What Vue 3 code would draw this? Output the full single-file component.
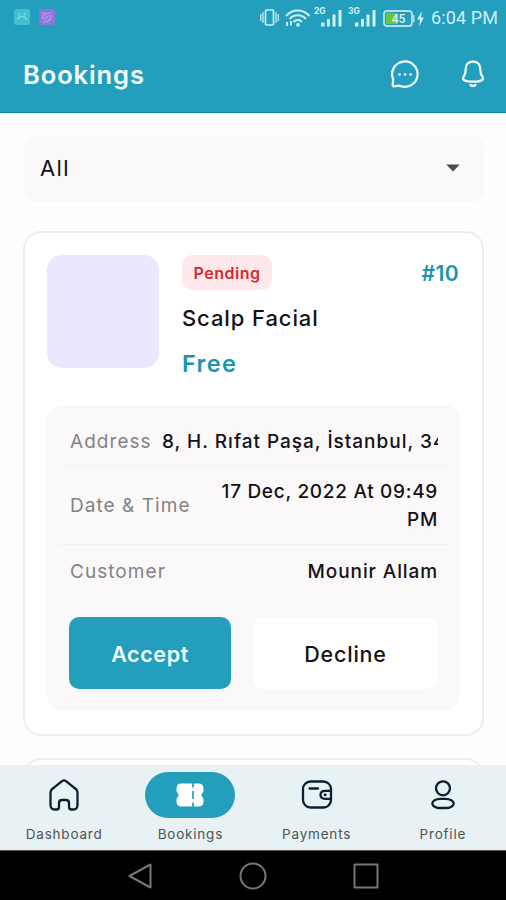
<script setup>
const rows = [
  { key: 'address', label: 'Address', value: '8, H. Rıfat Paşa, İstanbul, 34' },
  { key: 'date', label: 'Date & Time', value: '17 Dec, 2022 At 09:49 PM' },
  { key: 'customer', label: 'Customer', value: 'Mounir Allam' },
]
const tabs = [
  { key: 'dashboard', label: 'Dashboard' },
  { key: 'bookings', label: 'Bookings', active: true },
  { key: 'payments', label: 'Payments' },
  { key: 'profile', label: 'Profile' },
]
</script>

<template>
  <div class="screen">
    <header class="header">
      <div class="status">
        <div class="notes">
          <svg width="16" height="16" viewBox="0 0 16 16">
            <rect width="16" height="16" rx="2.5" fill="#40c1cd" />
            <path d="M3.500 11c.5-4.500 8.500-4.500 9 0M4.500 4l1.500 2.500M11.500 4L10 6.500" fill="none" stroke="#86dde3" stroke-width="1.200" />
          </svg>
          <svg width="16" height="16" viewBox="0 0 16 16">
            <rect width="16" height="16" rx="2.500" fill="#8c78d8" />
            <path d="M3 10c1-4 5-6 9-6M4 13c4 0 8-2 8.500-7M5 10.500l5-4M3 4h3" fill="none" stroke="#bba2ee" stroke-width="1.200" />
          </svg>
        </div>
        <div class="system">
          <svg class="system-icons" width="168" height="28" viewBox="0 0 168 28" fill="none">
            <g stroke="#cdf1f6" stroke-width="1.600">
              <rect x="5.500" y="10" width="8" height="15" rx="1" />
              <path d="M3 12v11M.8 14v7M16 12v11M18.200 14v7" stroke-width="1.200" />
            </g>
            <g stroke="#cdf1f6" stroke-width="2">
              <path d="M26 16c6.500-7.500 17-7.500 23.500 0M29.500 19c4.500-5 12-5 16.500 0M33.500 22c2.400-2.800 6.100-2.800 8.500 0" />
            </g>
            <circle cx="38" cy="24.800" r="1.900" fill="#cdf1f6" />
            <path d="M27 22v4M31 21v4.500" stroke="#cdf1f6" stroke-width="2" />
            <g fill="#cdf1f6">
              <path d="M61 22.500h3.500v4h-3.500zM67 19h3v7.500h-3zM72.500 14.500h3v12h-3zM78.500 10h3v16.500h-3z" />
              <path d="M95 22.500h3.500v4h-3.500zM101 19h3v7.500h-3zM106.500 14.500h3v12h-3zM112.500 10h3v16.500h-3z" />
              <text x="54" y="13.500" class="net">2G</text>
              <text x="88" y="13.500" class="net">3G</text>
            </g>
            <rect x="124" y="11" width="28" height="15" rx="3" stroke="#b9dce8" stroke-width="1.800" />
            <rect x="126" y="13" width="11.500" height="11" fill="#62c93d" />
            <path d="M153.500 15v7" stroke="#b9dce8" stroke-width="2" />
            <text x="138.500" y="23.300" text-anchor="middle" class="level">45</text>
            <path d="M162 11l-5 8.500h3l-1 7 5-9h-3z" fill="#cdf1f6" />
          </svg>
          <span class="clock">6:04 PM</span>
        </div>
      </div>
      <div class="bar">
        <h1 class="title">Bookings</h1>
        <div class="actions">
          <svg width="30" height="30" viewBox="0 0 30 30" fill="none" stroke="#f2fdff" stroke-width="2.200" stroke-linejoin="round">
            <path d="M3.200 20.200A12.700 12.700 0 1 1 9.600 26.700L3.600 27.300Q2.500 27.300 2.700 26z" />
            <path d="M9.500 15.500h.1M15 15.500h.1M20.500 15.500h.1" stroke-width="2.600" stroke-linecap="round" />
          </svg>
          <svg width="26" height="30" viewBox="0 0 26 30" fill="none" stroke="#f2fdff" stroke-width="2.300" stroke-linecap="round">
            <path d="M13 2.500c-4.500 0-7.300 3.200-7.300 7.500 0 4-.4 5.300-1.900 7.400-2.100 3.300.4 5.300 9.200 5.300s11.300-2 9.200-5.300c-1.500-2.100-1.900-3.400-1.900-7.400 0-4.300-2.800-7.500-7.300-7.500z" />
            <path d="M10.500 26c1.600 1.200 3.400 1.200 5 0" />
          </svg>
        </div>
      </div>
    </header>

    <main class="content">
      <div class="filter">
        <span>All</span>
        <svg width="14" height="8" viewBox="0 0 14 8"><path d="M.3.500h13.400L7 7.500z" fill="#4c4a4c" /></svg>
      </div>

      <article class="card">
        <div class="summary">
          <div class="thumb"></div>
          <div class="info">
            <div class="info-top">
              <span class="tag">Pending</span>
              <span class="number">#10</span>
            </div>
            <div class="service">Scalp Facial</div>
            <div class="price">Free</div>
          </div>
        </div>
        <div class="details">
          <div v-for="row in rows" :key="row.key" class="row" :class="row.key">
            <span class="label">{{ row.label }}</span>
            <span class="value">{{ row.value }}</span>
          </div>
          <div class="buttons">
            <button class="btn accept">Accept</button>
            <button class="btn decline">Decline</button>
          </div>
        </div>
      </article>
      <article class="card next"></article>
    </main>

    <nav class="tabs">
      <div v-for="tab in tabs" :key="tab.key" class="tab">
        <div class="pill" :class="{ active: tab.active }">
          <svg v-if="tab.key === 'dashboard'" width="32" height="34" viewBox="0 0 32 34" fill="none" stroke="#0b1f30" stroke-width="2.300" stroke-linejoin="round">
            <path d="M2.500 14.500q0-2.200 1.700-3.500L14 3.200q2-1.500 4 0L27.800 11q1.700 1.300 1.700 3.500V27q0 4.500-4.500 4.500h-1.500q-2.500 0-2.500-2.500v-4q0-3-3-3h-4q-3 0-3 3v4q0 2.500-2.500 2.500H7Q2.500 31.500 2.500 27z" />
          </svg>
          <svg v-else-if="tab.key === 'bookings'" width="30" height="26" viewBox="0 0 30 26">
            <path d="M6.500 1.500H23.500q5 0 5 5v2.200q0 1.300-1 2-2 2.300 0 4.600 1 .7 1 2v2.200q0 5-5 5H6.500q-5 0-5-5v-2.200q0-1.300 1-2 2-2.300 0-4.600-1-.7-1-2V6.500q0-5 5-5z" fill="#fff" />
            <path d="M18 1v4.500M18 9v8M18 20.500V25" stroke="#239ebc" stroke-width="1.700" />
          </svg>
          <svg v-else-if="tab.key === 'payments'" width="32" height="32" viewBox="0 0 32 32" fill="none" stroke="#0b1f30" stroke-width="2.300" stroke-linecap="round">
            <rect x="2" y="2.500" width="28" height="26" rx="7.500" />
            <path d="M8.500 9.500h8.500M30 11.800h-6q-4.500 0-4.500 4t4.500 4h6" />
            <path d="M24 15.800h.3" stroke-width="2.800" />
          </svg>
          <svg v-else width="26" height="32" viewBox="0 0 26 32" fill="none" stroke="#0b1f30" stroke-width="2.300">
            <circle cx="13" cy="9.300" r="7" />
            <rect x="2.300" y="19.800" width="21.400" height="9.200" rx="8" ry="4.600" />
          </svg>
        </div>
        <span class="tab-label">{{ tab.label }}</span>
      </div>
    </nav>

    <footer class="system-nav">
      <svg width="26" height="28" viewBox="0 0 26 28"><path d="M23.500 2.500v23L2.500 14z" /></svg>
      <svg width="28" height="28" viewBox="0 0 28 28"><circle cx="14" cy="14" r="12.500" /></svg>
      <svg width="26" height="26" viewBox="0 0 26 26"><rect x="1.500" y="1.500" width="23" height="23" /></svg>
    </footer>
  </div>
</template>

<style>
body {
  margin: 0;
}
</style>

<style scoped>
* {
  box-sizing: border-box;
}
svg {
  display: block;
  flex: none;
}
.screen {
  width: 506px;
  height: 900px;
  display: flex;
  flex-direction: column;
  overflow: hidden;
  background: #fefefe;
  color: #141214;
  font-family: Inter, "Work Sans", sans-serif;
}
.header {
  flex: none;
  height: 113px;
  background: #239ebc;
  border-bottom: 1px solid #138ba9;
  color: #f4feff;
}
.status {
  height: 36px;
  display: flex;
  justify-content: space-between;
  padding: 0 8px 0 14px;
}
.notes {
  display: flex;
  gap: 9px;
  padding-top: 9px;
}
.system {
  display: flex;
  align-items: center;
  gap: 3px;
}
.system-icons {
  margin-bottom: 8px;
}
.net {
  font: 700 8.5px Inter, sans-serif;
}
.level {
  font: 500 12px Roboto, sans-serif;
  fill: #d9f5ee;
}
.clock {
  font: 400 18px/36px Roboto, sans-serif;
  letter-spacing: 0.1px;
  color: #cdf1f6;
  white-space: nowrap;
}
.bar {
  display: flex;
  align-items: center;
  justify-content: space-between;
  height: 76px;
  padding: 0 20px 0 23px;
}
.title {
  margin: 0;
  padding-top: 2px;
  font-size: 25.5px;
  font-weight: 600;
  line-height: 32px;
  letter-spacing: 0.9px;
}
.actions {
  display: flex;
  align-items: center;
  gap: 40px;
}
.content {
  flex: 1;
  min-height: 0;
  overflow: hidden;
  padding: 23px 22px 0 23px;
}
.filter {
  display: flex;
  align-items: center;
  justify-content: space-between;
  height: 66px;
  margin-left: 1px;
  padding: 0 24px 3px 16px;
  border-radius: 12px;
  background: #faf8f9;
  font-size: 22px;
  letter-spacing: 1.4px;
}
.card {
  margin-top: 29px;
  height: 505px;
  padding: 22px;
  border: 2px solid #efeeef;
  border-radius: 18px;
  background: #fff;
}
.card.next {
  margin-top: 22px;
}
.summary {
  display: flex;
  gap: 23px;
  height: 150px;
}
.thumb {
  width: 112px;
  height: 113px;
  border-radius: 15px;
  background: #ebe7fe;
}
.info {
  flex: 1;
}
.info-top {
  display: flex;
  align-items: center;
  justify-content: space-between;
  height: 35px;
  padding-right: 1px;
}
.tag {
  width: 90px;
  padding-top: 1px;
  border-radius: 10px;
  background: #fde9ec;
  color: #dc2630;
  font-size: 16px;
  font-weight: 600;
  line-height: 34px;
  text-align: center;
  letter-spacing: 0.5px;
}
.number {
  padding-top: 1px;
  color: #1b94b0;
  font-size: 21px;
  font-weight: 600;
  letter-spacing: 0.4px;
}
.service {
  margin-top: 12px;
  font-size: 22px;
  font-weight: 500;
  line-height: 32px;
  letter-spacing: 0.9px;
}
.price {
  margin-top: 14px;
  color: #1b94b0;
  font-size: 23.5px;
  font-weight: 600;
  line-height: 32px;
  letter-spacing: 1.3px;
}
.details {
  height: 306px;
  padding: 12px 12px 0;
  border-radius: 16px;
  background: #faf8f9;
}
.row {
  display: flex;
  align-items: center;
  justify-content: space-between;
  padding: 2px 10px 0 11px;
  border-bottom: 1px solid #f2f0f2;
  font-size: 19px;
  line-height: 28px;
}
.address {
  height: 49px;
}
.date {
  height: 79px;
}
.customer {
  height: 51px;
  border-bottom: 0;
}
.label {
  flex: none;
  color: #858385;
  letter-spacing: 1.05px;
}
.value {
  font-weight: 500;
  text-align: right;
  letter-spacing: 0.9px;
}
.address .value {
  width: 276px;
  overflow: hidden;
  text-align: left;
  white-space: nowrap;
  letter-spacing: 0.98px;
}
.date .value {
  width: 230px;
  letter-spacing: 0.7px;
}
.buttons {
  display: grid;
  grid-template-columns: 162px 185px;
  gap: 22px;
  height: 72px;
  margin: 21px 10px 0;
}
.btn {
  padding: 2px 0 0;
  border: 0;
  border-radius: 10px;
  font: 600 21.5px Inter, sans-serif;
  letter-spacing: 0.6px;
}
.accept {
  background: #239ebc;
  color: #f4feff;
}
.decline {
  background: #fff;
  color: #141214;
  font-weight: 500;
  letter-spacing: 0.8px;
}
.tabs {
  flex: none;
  display: grid;
  grid-template-columns: repeat(4, 1fr);
  height: 85px;
  padding: 7px 0 0 1px;
  background: #e8f1f4;
}
.tab {
  display: flex;
  flex-direction: column;
  align-items: center;
}
.pill {
  display: flex;
  align-items: center;
  justify-content: center;
  width: 90px;
  height: 46px;
  border-radius: 23px;
}
.pill.active {
  background: #239ebc;
}
.tab-label {
  margin-top: 7px;
  color: #4d5457;
  font-size: 13.5px;
  line-height: 18px;
  letter-spacing: 0.8px;
}
.system-nav {
  flex: none;
  display: flex;
  align-items: center;
  justify-content: center;
  gap: 86px;
  height: 50px;
  border-top: 1px solid #555;
  background: #000;
}
.system-nav svg {
  fill: none;
  stroke: #777;
  stroke-width: 2;
  stroke-linejoin: round;
}
</style>
